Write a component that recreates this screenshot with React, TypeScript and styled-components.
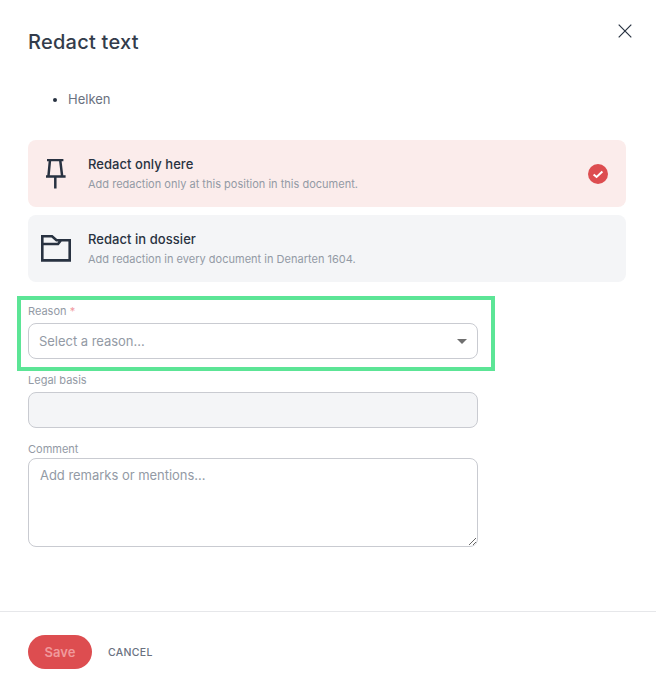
import React from "react";
import styled, { createGlobalStyle } from "styled-components";

const Global = createGlobalStyle`
  html, body { margin: 0; padding: 0; background: #fff; }
  body { font-family: Inter, "Liberation Sans", sans-serif; color: #283241; }
  * { box-sizing: border-box; }
`;

const Dialog = styled.div`
  position: relative;
  width: 656px;
  height: 689px;
  background: #fff;
  display: flex;
  flex-direction: column;
`;

const Header = styled.h1`
  margin: 0;
  padding: 30px 28px 0;
  height: 89px;
  font-size: 20px;
  line-height: 24px;
  font-weight: 500;
  letter-spacing: 0.25px;
  color: #333c4b;
`;

const CloseButton = styled.button`
  position: absolute;
  top: 20px;
  right: 20px;
  width: 22px;
  height: 22px;
  padding: 0;
  border: 0;
  background: none;
  display: flex;
  align-items: center;
  justify-content: center;
`;

const Body = styled.div`
  flex: 1;
  padding: 0 30px 0 28px;
  display: flex;
  flex-direction: column;
`;

const ValueList = styled.ul`
  margin: 0 0 32px;
  padding: 1px 0 0 40px;
  height: 19px;
  font-size: 13px;
  line-height: 19px;
  color: #6a7180;
  li::marker { color: #283241; }
`;

const Options = styled.div`
  display: flex;
  flex-direction: column;
  gap: 8px;
  margin-bottom: 23px;
`;

const Option = styled.div<{ $active?: boolean }>`
  height: 67px;
  border-radius: 8px;
  background: ${(p) => (p.$active ? "#fbeceb" : "#f4f5f7")};
  display: flex;
  align-items: center;
  padding: 0 18px 0 12px;
`;

const OptionIcon = styled.div`
  width: 32px;
  height: 32px;
  margin-right: 16px;
  display: flex;
  align-items: center;
  justify-content: center;
  flex: none;
`;

const OptionText = styled.div`
  flex: 1;
  display: flex;
  flex-direction: column;
  gap: 5px;
  margin-top: -1px;
`;

const OptionTitle = styled.div`
  font-size: 13px;
  line-height: 16px;
  font-weight: 500;
  letter-spacing: 0.05px;
  color: #283241;
`;

const OptionDescription = styled.div`
  font-size: 11px;
  line-height: 14px;
  letter-spacing: 0.01px;
  color: #939aa5;
`;

const Field = styled.div<{ $highlight?: boolean }>`
  position: relative;
  display: flex;
  flex-direction: column;
  width: 450px;
  margin-bottom: 15px;
  ${(p) =>
    p.$highlight &&
    `
    &::after {
      content: "";
      position: absolute;
      left: -11px;
      right: -17px;
      top: -9px;
      bottom: -12px;
      border: 4px solid #5ce596;
      pointer-events: none;
    }
  `}
`;

const Label = styled.label`
  font-size: 11px;
  line-height: 12px;
  height: 14px;
  margin-bottom: 4px;
  color: #939aa5;
`;

const Star = styled.span`
  color: #f19a9f;
`;

const Select = styled.div`
  height: 36px;
  border: 1px solid #c9cbd1;
  border-radius: 8px;
  background: #fff;
  display: flex;
  align-items: center;
  justify-content: space-between;
  padding: 0 10px;
  font-size: 13px;
  letter-spacing: -0.03px;
  color: #939aa5;
`;

const Caret = styled.span`
  width: 0;
  height: 0;
  border-left: 5.5px solid transparent;
  border-right: 5.5px solid transparent;
  border-top: 5.5px solid #6f6f6f;
`;

const DisabledInput = styled.div`
  height: 36px;
  border: 1px solid #c9cbd1;
  border-radius: 8px;
  background: #f4f5f7;
`;

const Comment = styled.textarea`
  display: block;
  width: 100%;
  height: 89px;
  margin: -3px 0 0;
  padding: 8px 11px;
  border: 1px solid #c9cbd1;
  border-radius: 8px;
  background: #fff;
  font-family: Inter, "Liberation Sans", sans-serif;
  font-size: 13px;
  line-height: 16px;
  letter-spacing: -0.03px;
  color: #283241;
  outline: none;
  &::placeholder { color: #939aa5; opacity: 1; }
`;

const Footer = styled.div`
  height: 78px;
  border-top: 1px solid #e6e7ea;
  padding: 23px 28px 0;
  display: flex;
  align-items: flex-start;
  gap: 16px;
`;

const SaveButton = styled.button`
  width: 64px;
  height: 34px;
  padding: 0;
  border: 0;
  border-radius: 17px;
  background: #dd4d50;
  color: #f09a9c;
  font-family: inherit;
  font-size: 13px;
  font-weight: 600;
`;

const CancelButton = styled.button`
  height: 34px;
  padding: 0;
  border: 0;
  background: none;
  color: #6a7180;
  font-family: inherit;
  font-size: 10.5px;
  font-weight: 500;
  letter-spacing: 0.3px;
`;

export default function App() {
  return (
    <>
      <Global />
      <Dialog>
        <Header>Redact text</Header>
        <CloseButton aria-label="Close">
          <svg width="14" height="14" viewBox="0 0 14 14" fill="none">
            <path d="M0.7 0.7L13.3 13.3M13.3 0.7L0.7 13.3" stroke="#283241" strokeWidth="1.2" />
          </svg>
        </CloseButton>
        <Body>
          <ValueList>
            <li>Helken</li>
          </ValueList>
          <Options>
            <Option $active>
              <OptionIcon>
                <svg width="20" height="30" viewBox="0 0 20 30" fill="none" stroke="#283241" strokeWidth="2.5">
                  <path d="M1 1H17.4M4 1L2.4 17.6M14.2 1L16.2 17.6M0 17.6H19.6M9.3 17.6V29.5" />
                </svg>
              </OptionIcon>
              <OptionText>
                <OptionTitle>Redact only here</OptionTitle>
                <OptionDescription>Add redaction only at this position in this document.</OptionDescription>
              </OptionText>
              <svg width="20" height="20" viewBox="0 0 20 20">
                <circle cx="10" cy="10" r="10" fill="#dd4d50" />
                <path d="M5.6 10.4L8.6 13L14.4 7.6" fill="none" stroke="#fff" strokeWidth="2" />
              </svg>
            </Option>
            <Option>
              <OptionIcon>
                <svg width="30" height="28" viewBox="0 0 30 28" fill="none" stroke="#283241" strokeWidth="2.6">
                  <path d="M1.3 1.3H11L15.5 5.2H28.7V25.4H1.3ZM1.3 9H17L20 5.2" />
                </svg>
              </OptionIcon>
              <OptionText>
                <OptionTitle>Redact in dossier</OptionTitle>
                <OptionDescription>Add redaction in every document in Denarten 1604.</OptionDescription>
              </OptionText>
            </Option>
          </Options>
          <Field $highlight>
            <Label>
              Reason <Star>*</Star>
            </Label>
            <Select>
              Select a reason...
              <Caret />
            </Select>
          </Field>
          <Field>
            <Label>Legal basis</Label>
            <DisabledInput />
          </Field>
          <Field>
            <Label>Comment</Label>
            <Comment placeholder="Add remarks or mentions..." />
          </Field>
        </Body>
        <Footer>
          <SaveButton>Save</SaveButton>
          <CancelButton>CANCEL</CancelButton>
        </Footer>
      </Dialog>
    </>
  );
}
